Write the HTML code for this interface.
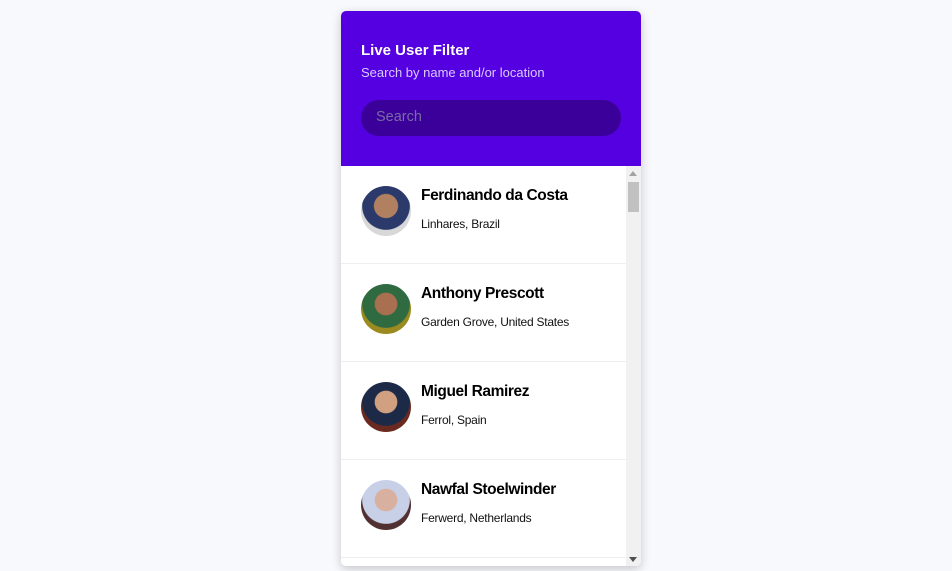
<!DOCTYPE html>
<html><head><style>
*{box-sizing:border-box;margin:0;padding:0}
body{width:952px;height:571px;background:#f8f9fd;font-family:"Liberation Sans",sans-serif;overflow:hidden;position:relative}
.card{position:absolute;left:341px;top:11px;width:300px;height:555px;background:#fff;border-radius:5px;box-shadow:0 3px 10px rgba(0,0,0,.2);overflow:hidden}
.hd{height:155px;background:#5500e0;padding:31px 20px 0}
.hd h4{color:#fff;font-size:15px;font-weight:bold}
.hd p{color:#d8ccff;font-size:13px;margin-top:6px}
.srch{margin-top:20px;height:36px;border-radius:18px;background:#3a0099;color:#7a6aa6;font-size:14.5px;padding:9px 15px}
.list{position:relative;height:400px}
.item{height:98px;border-bottom:1px solid #eee;padding:20px 0 0 20px;display:flex;width:285px}
.av{width:50px;height:50px;border-radius:50%;flex:none}
.tx{margin-left:10px}
.tx b{display:block;font-size:15.5px;color:#000;margin-top:1px;letter-spacing:-0.4px}
.tx span{display:block;font-size:12px;color:#111;margin-top:12px;letter-spacing:-0.25px}
.sb{position:absolute;right:0;top:0;width:15px;height:400px;background:#f1f1f1}
.th{position:absolute;left:2px;top:16px;width:11px;height:30px;background:#c1c1c1}
.ua{position:absolute;left:3px;top:5px;border:4px solid transparent;border-bottom:5px solid #a3a3a3;border-top:0}
.da{position:absolute;left:3px;bottom:4px;border:4px solid transparent;border-top:5px solid #505050;border-bottom:0}
</style></head><body>
<div class="card">
<div class="hd"><h4>Live User Filter</h4><p>Search by name and/or location</p><div class="srch">Search</div></div>
<div class="list">
<div class="item"><div class="av" style="background:radial-gradient(circle at 50% 40%,#b08060 0 30%,#2b3a6a 32% 60%,#d8d8d8 62%)"></div><div class="tx"><b>Ferdinando da Costa</b><span>Linhares, Brazil</span></div></div>
<div class="item"><div class="av" style="background:radial-gradient(circle at 50% 40%,#a87050 0 28%,#2f6a40 30% 60%,#9a8a20 62%)"></div><div class="tx"><b>Anthony Prescott</b><span>Garden Grove, United States</span></div></div>
<div class="item"><div class="av" style="background:radial-gradient(circle at 50% 40%,#d0a080 0 28%,#1c2a48 30% 60%,#6a2a20 62%)"></div><div class="tx"><b>Miguel Ramirez</b><span>Ferrol, Spain</span></div></div>
<div class="item"><div class="av" style="background:radial-gradient(circle at 50% 40%,#d8b0a0 0 28%,#c8d0e8 30% 60%,#503030 62%)"></div><div class="tx"><b>Nawfal Stoelwinder</b><span>Ferwerd, Netherlands</span></div></div>
<div class="sb"><div class="ua"></div><div class="th"></div><div class="da"></div></div>
</div></div>
</body></html>
